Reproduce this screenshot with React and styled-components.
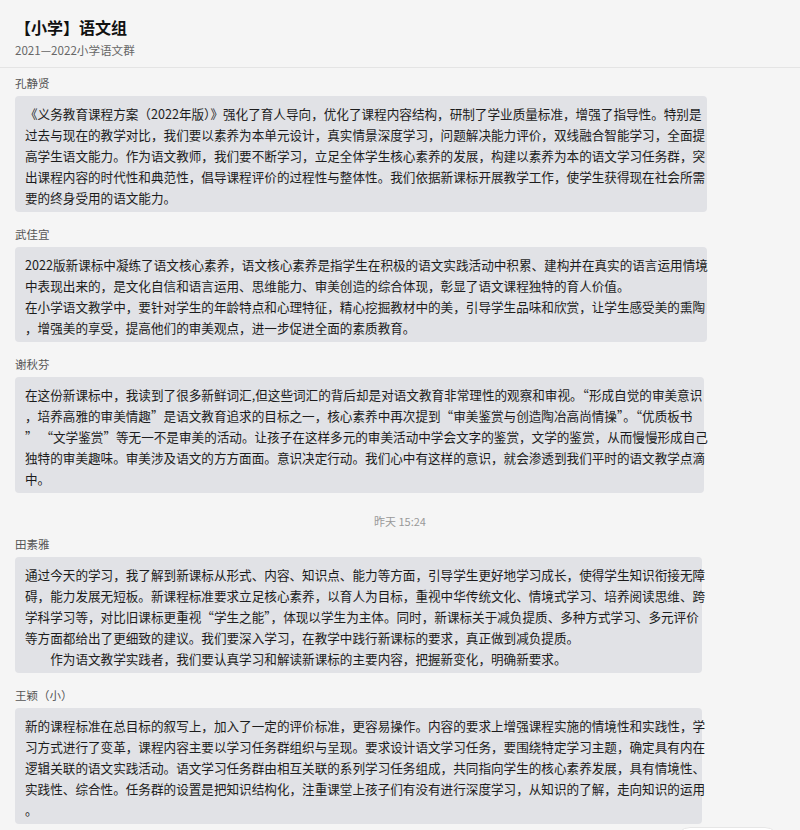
import React from "react"
import styled, { createGlobalStyle } from "styled-components"

const GlobalStyle = createGlobalStyle`
  html, body {
    margin: 0;
    padding: 0;
    background: #f5f5f5;
  }
  body {
    font-family: "Noto Sans CJK SC", "Noto Sans", sans-serif;
    color: #1c1c1c;
  }
`

const Page = styled.div`
  position: relative;
  min-height: 830px;
  background: #f5f5f5;
`

const Header = styled.header`
  padding: 16px 15px 8px;
  border-bottom: 1px solid #e4e4e4;
`

const Title = styled.h1`
  margin: 0;
  font-size: 16px;
  line-height: 22px;
  font-weight: 700;
  color: #111;
`

const Subtitle = styled.div`
  margin-top: 3px;
  font-size: 11.6px;
  line-height: 18px;
  color: #666;
`

const Feed = styled.main`
  padding: 6px 15px 0;
  display: flex;
  flex-direction: column;
  align-items: flex-start;
`

const Message = styled.section`
  display: flex;
  flex-direction: column;
  align-items: flex-start;
  margin-bottom: 13px;
`

const Sender = styled.div`
  font-size: 11.5px;
  line-height: 18px;
  color: #555;
  margin-bottom: 4px;
`

const Bubble = styled.div`
  box-sizing: border-box;
  width: ${({ $width }) => $width}px;
  padding: 7px 10px 4px;
  background: #e1e2e6;
  border-radius: 4px;
  font-size: 12.6px;
  line-height: 21px;
  color: #1c1c1c;
  white-space: pre;
`

const Stamp = styled.div`
  align-self: stretch;
  text-align: center;
  margin: 6px -15px 5px;
  font-size: 11px;
  line-height: 18px;
  color: #999;
`

const FloatPill = styled.div`
  position: fixed;
  left: 675px;
  top: 827px;
  width: 105px;
  height: 30px;
  border-radius: 15px;
  background: #fff;
  border: 1px solid #e6e6e6;
  box-sizing: border-box;
`

const messages = [
  {
    name: "孔静贤",
    width: 692,
    lines: [
      "《义务教育课程方案（2022年版）》强化了育人导向，优化了课程内容结构，研制了学业质量标准，增强了指导性。特别是",
      "过去与现在的教学对比，我们要以素养为本单元设计，真实情景深度学习，问题解决能力评价，双线融合智能学习，全面提",
      "高学生语文能力。作为语文教师，我们要不断学习，立足全体学生核心素养的发展，构建以素养为本的语文学习任务群，突",
      "出课程内容的时代性和典范性，倡导课程评价的过程性与整体性。我们依据新课标开展教学工作，使学生获得现在社会所需",
      "要的终身受用的语文能力。",
    ],
  },
  {
    name: "武佳宜",
    width: 692,
    lines: [
      "2022版新课标中凝练了语文核心素养，语文核心素养是指学生在积极的语文实践活动中积累、建构并在真实的语言运用情境",
      "中表现出来的，是文化自信和语言运用、思维能力、审美创造的综合体现，彰显了语文课程独特的育人价值。",
      "在小学语文教学中，要针对学生的年龄特点和心理特征，精心挖掘教材中的美，引导学生品味和欣赏，让学生感受美的熏陶",
      "，增强美的享受，提高他们的审美观点，进一步促进全面的素质教育。",
    ],
  },
  {
    name: "谢秋芬",
    width: 689,
    lines: [
      "在这份新课标中，我读到了很多新鲜词汇,但这些词汇的背后却是对语文教育非常理性的观察和审视。“形成自觉的审美意识",
      "，培养高雅的审美情趣”是语文教育追求的目标之一，核心素养中再次提到“审美鉴赏与创造陶冶高尚情操”。“优质板书",
      "” “文学鉴赏”等无一不是审美的活动。让孩子在这样多元的审美活动中学会文字的鉴赏，文学的鉴赏，从而慢慢形成自己",
      "独特的审美趣味。审美涉及语文的方方面面。意识决定行动。我们心中有这样的意识，就会渗透到我们平时的语文教学点滴",
      "中。",
    ],
  },
  { stamp: "昨天 15:24" },
  {
    name: "田素雅",
    width: 687,
    lines: [
      "通过今天的学习，我了解到新课标从形式、内容、知识点、能力等方面，引导学生更好地学习成长，使得学生知识衔接无障",
      "碍，能力发展无短板。新课程标准要求立足核心素养，以育人为目标，重视中华传统文化、情境式学习、培养阅读思维、跨",
      "学科学习等，对比旧课标更重视“学生之能”，体现以学生为主体。同时，新课标关于减负提质、多种方式学习、多元评价",
      "等方面都给出了更细致的建议。我们要深入学习，在教学中践行新课标的要求，真正做到减负提质。",
      "　　作为语文教学实践者，我们要认真学习和解读新课标的主要内容，把握新变化，明确新要求。",
    ],
  },
  {
    name: "王颖（小）",
    width: 687,
    lines: [
      "新的课程标准在总目标的叙写上，加入了一定的评价标准，更容易操作。内容的要求上增强课程实施的情境性和实践性，学",
      "习方式进行了变革，课程内容主要以学习任务群组织与呈现。要求设计语文学习任务，要围绕特定学习主题，确定具有内在",
      "逻辑关联的语文实践活动。语文学习任务群由相互关联的系列学习任务组成，共同指向学生的核心素养发展，具有情境性、",
      "实践性、综合性。任务群的设置是把知识结构化，注重课堂上孩子们有没有进行深度学习，从知识的了解，走向知识的运用",
      "。",
    ],
  },
]

export default function App() {
  return (
    <Page>
      <GlobalStyle />
      <Header>
        <Title>【小学】语文组</Title>
        <Subtitle>2021—2022小学语文群</Subtitle>
      </Header>
      <Feed>
        {messages.map((m, i) =>
          m.stamp ? (
            <Stamp key={i}>{m.stamp}</Stamp>
          ) : (
            <Message key={i}>
              <Sender>{m.name}</Sender>
              <Bubble $width={m.width}>{m.lines.join("\n")}</Bubble>
            </Message>
          )
        )}
      </Feed>
      <FloatPill />
    </Page>
  )
}
